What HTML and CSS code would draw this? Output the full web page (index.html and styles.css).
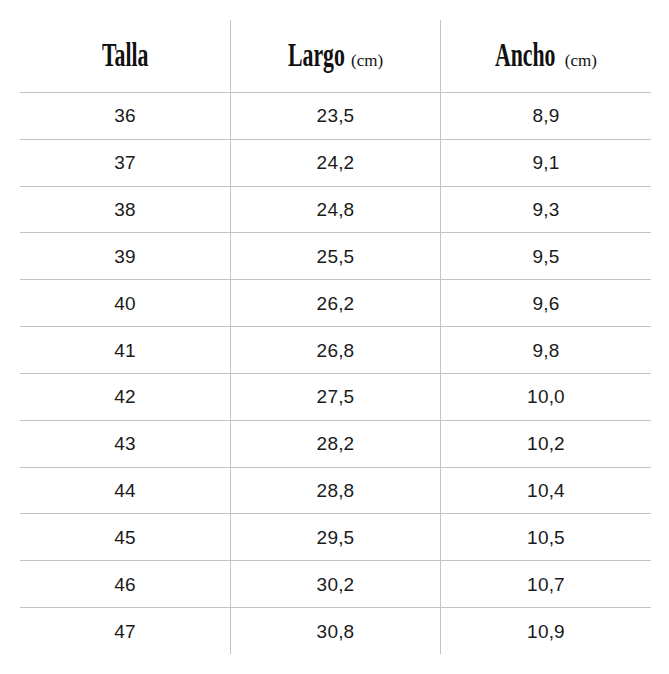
FILE: index.html
```html
<!DOCTYPE html>
<html lang="es">
<head>
<meta charset="utf-8">
<title>Guía de tallas</title>
<link rel="stylesheet" href="styles.css">
</head>
<body>
<div class="size-table">
  <div class="cell head"><span class="title title-talla">Talla</span></div>
  <div class="cell head"><span class="title title-largo">Largo</span><span class="unit">(cm)</span></div>
  <div class="cell head"><span class="title title-ancho">Ancho</span><span class="unit">(cm)</span></div>

  <div class="cell">36</div><div class="cell">23,5</div><div class="cell">8,9</div>
  <div class="cell">37</div><div class="cell">24,2</div><div class="cell">9,1</div>
  <div class="cell">38</div><div class="cell">24,8</div><div class="cell">9,3</div>
  <div class="cell">39</div><div class="cell">25,5</div><div class="cell">9,5</div>
  <div class="cell">40</div><div class="cell">26,2</div><div class="cell">9,6</div>
  <div class="cell">41</div><div class="cell">26,8</div><div class="cell">9,8</div>
  <div class="cell">42</div><div class="cell">27,5</div><div class="cell">10,0</div>
  <div class="cell">43</div><div class="cell">28,2</div><div class="cell">10,2</div>
  <div class="cell">44</div><div class="cell">28,8</div><div class="cell">10,4</div>
  <div class="cell">45</div><div class="cell">29,5</div><div class="cell">10,5</div>
  <div class="cell">46</div><div class="cell">30,2</div><div class="cell">10,7</div>
  <div class="cell">47</div><div class="cell">30,8</div><div class="cell">10,9</div>
</div>
</body>
</html>
```
FILE: styles.css
```css
html, body {
  margin: 0;
  padding: 0;
  background: #ffffff;
}

body {
  padding: 20px 18px 0 20px;
}

.size-table {
  display: grid;
  grid-template-columns: 210px 210px 211px;
  grid-template-rows: 72px repeat(12, 46.833px);
  font-family: "Liberation Sans", Arial, sans-serif;
  font-size: 19px;
  letter-spacing: 0.2px;
  color: #1a1a1a;
}

.cell {
  display: flex;
  align-items: center;
  justify-content: center;
  border-top: 1px solid #c3c3c3;
  box-sizing: border-box;
  padding-top: 1px;
}

.cell:nth-child(3n+2),
.cell:nth-child(3n) {
  border-left: 1px solid #c3c3c3;
}

.cell.head {
  border-top: none;
  align-items: baseline;
  padding-top: 19px;
  color: #111111;
  font-family: "Liberation Serif", "Times New Roman", serif;
  letter-spacing: 0;
}

.title {
  display: inline-block;
  font-size: 33px;
  font-weight: bold;
  transform: scaleX(0.66);
  transform-origin: left center;
  line-height: 1;
}

.title-talla {
  margin-right: -25px;
}

.title-largo {
  margin-right: -23px;
}

.title-ancho {
  margin-right: -22px;
}

.unit {
  display: inline-block;
  font-size: 17px;
  line-height: 1;
}
```
